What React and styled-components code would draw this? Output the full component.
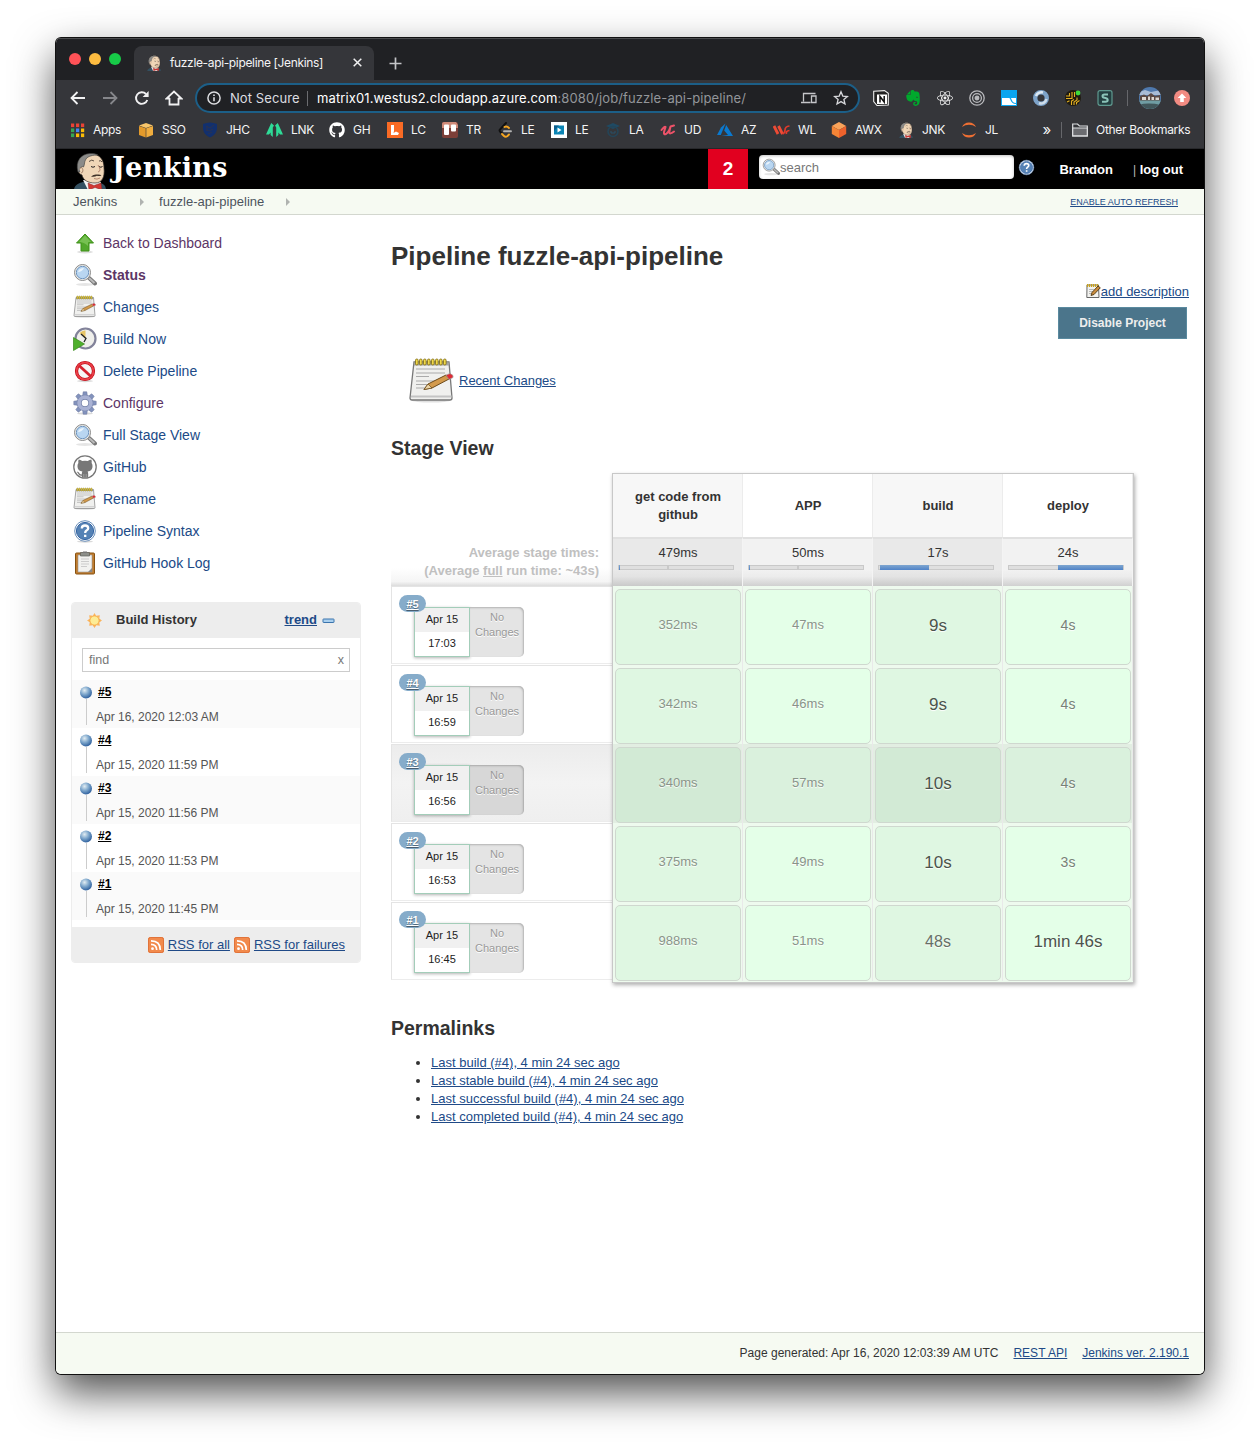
import React from "react";
import styled, { createGlobalStyle } from "styled-components";
import { FaGithub } from "react-icons/fa";
import { SiEvernote, SiReact } from "react-icons/si";

const UI = `Inter, Roboto, "Liberation Sans", sans-serif`;
const HELV = `"Liberation Sans", Arial, sans-serif`;

const Global = createGlobalStyle`
  *, *::before, *::after { box-sizing: border-box; }
  body { margin: 0; background: #fff; font-family: ${HELV}; font-size: 13px; color: #333; }
  h1, h2, ul, p { margin: 0; padding: 0; }
  svg { display: block; flex: none; }
`;

const Desktop = styled.div`
  height: 1448px;
  padding: 38px 56px 74px;
  background: #fff;
  overflow: hidden;
`;
const Window = styled.div`
  height: 1336px;
  display: flex;
  flex-direction: column;
  border-radius: 5px;
  background: #fff;
  overflow: hidden;
  box-shadow: 0 0 0 1px #111, 0 18px 42px rgba(0, 0, 0, 0.7);
`;

/* ---------- browser chrome ---------- */
const TabStrip = styled.div`
  height: 42px;
  display: flex;
  align-items: flex-end;
  background: #202124;
  border-top: 1px solid #4b4c4e;
`;
const Lights = styled.div`
  width: 78px;
  height: 100%;
  padding: 14px 0 0 13px;
  display: flex;
  gap: 8px;
`;
const Light = styled.i`
  width: 12px;
  height: 12px;
  border-radius: 50%;
  background: ${(p) => p.$c};
`;
const Tab = styled.div`
  width: 240px;
  height: 34px;
  padding: 0 12px 1px 12px;
  display: flex;
  align-items: center;
  background: #35363a;
  border-radius: 8px 8px 0 0;
  font: 12px ${UI};
  letter-spacing: -0.35px;
  color: #f4f4f5;
`;
const TabTitle = styled.span`
  flex: 1;
  margin-left: 8px;
  white-space: nowrap;
`;
const NewTab = styled.div`
  height: 34px;
  display: flex;
  align-items: center;
  margin-left: 15px;
`;
const Toolbar = styled.div`
  height: 36px;
  padding: 0 14px;
  display: flex;
  align-items: center;
  background: #35363a;
`;
const NavButtons = styled.div`
  width: 125px;
  display: flex;
  gap: 16px;
  svg:last-child { margin-left: -1px; }
`;
const AddressBar = styled.div`
  width: 665px;
  height: 30px;
  padding: 0 9px 0 10px;
  display: flex;
  align-items: center;
  border: 2px solid #1c5f88;
  border-radius: 15px;
  background: #202124;
  font: 13px ${UI};
  color: #fff;
`;
const Secure = styled.span`
  width: 78px;
  margin-left: 9px;
  letter-spacing: 0.08px;
  color: #dcdde0;
  white-space: nowrap;
  border-right: 1px solid #6b6c70;
  line-height: 15px;
`;
const Url = styled.span`
  flex: 1;
  margin-left: 9px;
  letter-spacing: 0.11px;
  white-space: nowrap;
  span { color: #93969a; }
`;
const BarIcons = styled.div`
  display: flex;
  gap: 16px;
`;
const Extensions = styled.div`
  display: flex;
  align-items: center;
  gap: 16px;
  margin-left: 13px;
`;
const Divider = styled.i`
  width: 1px;
  height: 16px;
  background: #66676b;
  margin-left: ${(p) => p.$l || 0}px;
  margin-right: ${(p) => p.$r || 0}px;
`;
const Profile = styled.div`
  display: flex;
  align-items: center;
  gap: 13px;
`;
const Bookmarks = styled.div`
  height: 33px;
  padding: 0 14px 5px 13px;
  display: flex;
  align-items: center;
  background: #35363a;
  border-bottom: 1px solid #27282b;
  font: 12px ${UI};
  letter-spacing: -0.3px;
  color: #f4f4f5;
`;
const Bookmark = styled.div`
  width: ${(p) => p.$w}px;
  display: flex;
  align-items: center;
  gap: 8px;
  white-space: nowrap;
`;
const More = styled.span`
  flex: 1;
  text-align: right;
  font-size: 15px;
`;

/* ---------- Jenkins header ---------- */
const Header = styled.header`
  height: 40px;
  flex: none;
  display: flex;
  align-items: center;
  background: #000;
  color: #fff;
  font-weight: bold;
`;
const Logo = styled.div`
  width: 652px;
  height: 40px;
  padding: 3px 0 0 18px;
  display: flex;
  align-items: flex-start;
  gap: 6px;
  overflow: hidden;
  font: bold 27px/32px "DejaVu Serif", serif;
  letter-spacing: 0.35px;
`;
const Alerts = styled.div`
  width: 40px;
  height: 40px;
  line-height: 40px;
  text-align: center;
  font-size: 19px;
  background: #e1001f;
`;
const Search = styled.div`
  width: 255px;
  height: 24px;
  margin: -4px 4px 0 11px;
  padding-left: 3px;
  display: flex;
  align-items: center;
  border-radius: 4px;
  background: #fff;
  box-shadow: inset 0 1px 3px rgba(0, 0, 0, 0.25);
  font-size: 13px;
  font-weight: normal;
  color: #777;
`;
const HelpLink = styled.div`
  margin-top: -3px;
`;
const Account = styled.div`
  flex: 1;
  margin-right: 21px;
  padding-top: 1px;
  display: flex;
  justify-content: flex-end;
  gap: 20px;
  font-size: 13px;
  i { font: 12px ${HELV}; color: #bbb; }
`;
const Crumbs = styled.nav`
  height: 26px;
  flex: none;
  padding: 0 26px 0 17px;
  display: flex;
  align-items: center;
  background: #f6faf2;
  border-bottom: 1px solid #d3d7cf;
  color: #4d545d;
  font-size: 13px;
`;
const Crumb = styled.span`
  width: ${(p) => p.$w}px;
  padding-left: ${(p) => p.$pl || 0}px;
  letter-spacing: 0.03px;
`;
const Link = styled.a`
  color: #204a87;
  text-decoration: underline;
`;
const Refresh = styled(Link)`
  margin-left: auto;
  font-size: 9px;
`;

/* ---------- page ---------- */
const Page = styled.div`
  flex: 1;
  display: grid;
  grid-template-columns: 290px 1fr;
  column-gap: 30px;
  padding: 12px 15px 0;
`;
const Tasks = styled.div`
  display: flex;
  flex-direction: column;
  padding-left: 2px;
`;
const Task = styled.a`
  height: 32px;
  display: flex;
  align-items: center;
  gap: 6px;
  font-size: 14px;
  color: ${(p) => (p.$visited ? "#5c3566" : "#204a87")};
  font-weight: ${(p) => (p.$bold ? "bold" : "normal")};
`;
const History = styled.section`
  margin-top: 23px;
  height: 361px;
  border: 1px solid #ededed;
  border-radius: 4px;
  overflow: hidden;
  display: flex;
  flex-direction: column;
`;
const HistoryHead = styled.div`
  height: 35px;
  flex: none;
  padding: 0 25px 2px 14px;
  display: flex;
  align-items: center;
  background: #ededed;
  font-weight: bold;
  span { flex: 1; margin-left: 13px; }
  svg { margin-top: 2px; }
  svg:last-child { margin-left: 5px; margin-top: 3px; }
`;
const Find = styled.div`
  height: 24px;
  flex: none;
  margin: 10px 10px 8px;
  padding: 0 5px 0 6px;
  display: flex;
  justify-content: space-between;
  align-items: center;
  border: 1px solid #ccc;
  color: #777;
  font-size: 12.5px;
`;
const Build = styled.div`
  height: 48px;
  flex: none;
  padding: 6px 0 0 8px;
  display: flex;
  gap: 4px;
  background: ${(p) => (p.$odd ? "#fafafa" : "#fff")};
`;
const Marker = styled.div`
  width: 12px;
  display: flex;
  flex-direction: column;
  align-items: flex-start;
`;
const Stem = styled.i`
  width: 1px;
  height: 26px;
  margin-left: 6px;
  background: #ccc;
`;
const BuildText = styled.div`
  display: flex;
  flex-direction: column;
  gap: 11px;
  font-size: 12px;
  line-height: 14px;
  color: #555;
  b { margin-left: 2px; color: #000; text-decoration: underline; line-height: 13px; }
`;
const HistoryFoot = styled.div`
  flex: 1;
  margin-top: 7px;
  padding-right: 15px;
  display: flex;
  align-items: center;
  justify-content: flex-end;
  gap: 4px;
  background: #ededed;
`;
const Main = styled.main`
  display: flex;
  flex-direction: column;
  align-items: flex-start;
`;
const Title = styled.h1`
  margin-top: 14px;
  font-size: 26px;
  line-height: 30px;
`;
const Actions = styled.div`
  align-self: flex-end;
  display: flex;
  flex-direction: column;
  align-items: flex-end;
  margin-top: 12px;
`;
const Inline = styled.div`
  display: flex;
  align-items: center;
  height: 16px;
`;
const Disable = styled.button`
  width: 129px;
  height: 32px;
  margin: 8px 2px 0 0;
  padding: 0;
  border: 1px solid #5a8a9f;
  background: #4b758b;
  color: #eee;
  font: bold 12px ${HELV};
`;
const Recent = styled.div`
  margin: 17px 0 1px 17px;
  height: 48px;
  display: flex;
  align-items: center;
  gap: 3px;
  svg { margin-top: 2px; }
`;
const Subtitle = styled.h2`
  margin-top: ${(p) => p.$mt}px;
  font-size: 19.5px;
  line-height: 24px;
`;
const StageView = styled.div`
  margin-top: 13px;
  display: flex;
`;
const Runs = styled.div`
  width: 221px;
  display: flex;
  flex-direction: column;
`;
const Average = styled.div`
  height: 113px;
  padding: 0 13px 6px 0;
  display: flex;
  flex-direction: column;
  justify-content: flex-end;
  text-align: right;
  font-weight: bold;
  line-height: 18px;
  color: #c0c0c0;
  background: linear-gradient(rgba(255, 255, 255, 0) 84%, #f5f5f5 96%, #dcdcdc);
`;
const Run = styled.div`
  height: 77.5px;
  margin-bottom: 1.5px;
  padding: 8px 0 0 7px;
  border: 1px solid #e4e4e4;
  border-right: 0;
  border-bottom-color: #ececec;
  background: ${(p) => (p.$hover ? "linear-gradient(#ececec, #f3f3f3 50%, #efefef)" : "#fff")};
`;
const Pill = styled.b`
  position: relative;
  z-index: 1;
  display: block;
  width: 27px;
  height: 17px;
  border-radius: 9px;
  background: #86acca;
  color: #fff;
  font-size: 11px;
  line-height: 18px;
  text-align: center;
  text-decoration: underline;
  text-shadow: 0 1px 1px rgba(0, 0, 0, 0.45);
`;
const RunInfo = styled.div`
  margin: -5px 0 0 15px;
  display: flex;
  height: 50px;
`;
const RunDate = styled.div`
  width: 56px;
  border: 1px solid #a3cdb9;
  box-shadow: 0 1px 3px rgba(0, 0, 0, 0.3);
  background: #fff;
  font-size: 11px;
  line-height: 22px;
  text-align: center;
  color: #222;
  span { display: block; height: 24px; }
  span:first-child { background: #f0f0f0; }
`;
const NoChanges = styled.div`
  width: 54px;
  padding-top: 3px;
  border-radius: 0 5px 5px 0;
  background: ${(p) => (p.$hover ? "#d7d7d7" : "#e4e4e4")};
  box-shadow: inset -1px 1px 2px rgba(0, 0, 0, 0.22);
  font-size: 11px;
  line-height: 15px;
  text-align: center;
  color: #999;
  text-shadow: 0 1px 0 #fff;
`;
const Stages = styled.div`
  width: 522px;
  height: 510px;
  border: 1px solid #c8c8c8;
  box-shadow: 1px 2px 4px rgba(0, 0, 0, 0.32);
  display: grid;
  grid-template-columns: repeat(4, 130px);
  grid-template-rows: 63px 49px repeat(5, 79px);
  background: #eefbee;
`;
const StageName = styled.div`
  padding: 0 13px 0 14px;
  border-right: 1px solid #ececec;
  display: flex;
  align-items: center;
  justify-content: center;
  text-align: center;
  font-weight: bold;
  line-height: 18px;
  background: ${(p) => (p.$odd ? "#f7f7f7" : "#fff")};
`;
const StageAvg = styled.div`
  padding: 6px 8px 0 5px;
  border-top: 2px solid #e0e0e0;
  border-right: 1px solid #f4f4f4;
  line-height: 16px;
  color: #333;
  background: ${(p) =>
    p.$odd
      ? "linear-gradient(#e9e9e9 65%, #e3e3e3 80%, #c9c9c9)"
      : "linear-gradient(#f2f2f2 65%, #ececec 80%, #d0d0d0)"};
`;
const AvgTime = styled.div`
  padding-left: 4px;
  text-align: center;
`;
const Meter = styled.div`
  height: 5px;
  margin-top: 4px;
  display: flex;
  border: 1px solid #c9c9c9;
  background: #dfdfdf;
`;
const MeterFill = styled.i`
  height: 5px;
  margin-top: -1px;
  background: linear-gradient(#7fa6d0, #4f83c8);
`;
const Tick = styled.i`
  width: 2px;
  margin-left: 47px;
  background: #c9c9c9;
`;
const Cell = styled.div`
  padding: 3px 2px 0;
  border-right: 1px solid #e9e9e9;
  background: ${(p) => (p.$hover ? "#e2eee2" : "#eefaee")};
`;
const Card = styled.div`
  width: 126px;
  height: 76px;
  padding-bottom: ${(p) => (p.$fs > 15 ? 3 : 5)}px;
  display: flex;
  align-items: center;
  justify-content: center;
  border: 1px solid #cfd8cf;
  border-radius: 5px;
  background: ${(p) => p.$bg};
  color: ${(p) => p.$fg};
  font-size: ${(p) => p.$fs}px;
  text-shadow: 0 1px 1px #fff;
`;
const Permalinks = styled.ul`
  margin-top: 14px;
  padding-left: 40px;
  line-height: 18px;
`;
const Footer = styled.footer`
  height: 42px;
  flex: none;
  padding: 0 15px 1px;
  display: flex;
  align-items: center;
  justify-content: flex-end;
  gap: 15px;
  background: #f6faf2;
  border-top: 1px solid #d3d7cf;
  font-size: 12px;
`;

/* ---------- drawings ---------- */
const Butler = ({ w = 32, h = 38 }) => (
  <svg width={w} height={h} viewBox="0 0 32 38">
    <path d="M0 38C0 34 4 31 9 30L26 31C30 32 32 34 32 38Z" fill="#335061" />
    <path d="M9 28L14 38H24L27 30Z" fill="#f4f4f4" />
    <path d="M4 17C3 7 9 2 17 2C26 2 30 8 30 16C31 25 28 31 21 31C14 31 9 28 8 23C5 22 4 20 4 17Z" fill="#f0d6b7" stroke="#3a302a" strokeWidth=".7" />
    <path d="M4 20C1 9 7 2 16 1.500C19 1.400 22 1.800 24 3C19 3 14 4 12 7C10 10 11 12 9.500 15C8 14 6 15 6 20Z" fill="#8b8b89" stroke="#3a3a39" strokeWidth=".6" />
    <path d="M5.500 17Q8 14 9 18Q9 21 7 21" fill="#f0d6b7" stroke="#8a6550" strokeWidth=".7" />
    <path d="M15 9.500Q18 7 20 9M25 9Q27 8 28 10" fill="none" stroke="#4a3d33" strokeWidth=".9" />
    <path d="M17 14.500Q19 16 21 14.500M25 14.500Q27 16 28.500 14.500" fill="none" stroke="#231f20" strokeWidth="1" />
    <path d="M24 13Q28 19 24 20" fill="none" stroke="#a7745e" strokeWidth=".8" />
    <path d="M17 24.500Q20 22 23 22.500Q26 22 27.500 23.500Q25 24.500 23 23.800Q20 25.500 17 24.500Z" fill="#3d3028" />
    <path d="M20 26.500Q23 28 26 26" fill="none" stroke="#a7745e" strokeWidth=".8" />
    <path d="M14 31L20 33.500L27 31L28 38L21 35.500L15 38Z" fill="#d33833" stroke="#81302c" strokeWidth=".5" />
  </svg>
);
const Arrow = ({ dim, flip }) => (
  <svg width="16" height="16" viewBox="0 0 16 16" fill="none" stroke={dim ? "#85868a" : "#f1f1f2"} strokeWidth="1.800">
    <path d={flip ? "M1 8H14M8.500 2L14.500 8L8.500 14" : "M15 8H2M7.500 2L1.500 8L7.500 14"} />
  </svg>
);
const Reload = () => (
  <svg width="16" height="16" viewBox="0 0 16 16">
    <path d="M13.300 10A5.800 5.800 0 1 1 12 4" fill="none" stroke="#f1f1f2" strokeWidth="1.900" />
    <path d="M14.600 1V7H8.600Z" fill="#f1f1f2" />
  </svg>
);
const Home = () => (
  <svg width="18" height="16" viewBox="0 0 18 16" fill="none" stroke="#f1f1f2" strokeWidth="1.800">
    <path d="M4.500 8V14.500H13.500V8M5 8.500H1.500L9 1.500L16.500 8.500H13" />
  </svg>
);
const Info = () => (
  <svg width="14" height="14" viewBox="0 0 14 14">
    <circle cx="7" cy="7" r="6.100" fill="none" stroke="#dcdde0" strokeWidth="1.500" />
    <path d="M7 6.200V10.300M7 3.500V5" stroke="#dcdde0" strokeWidth="1.600" />
  </svg>
);
const Devices = () => (
  <svg width="16" height="16" viewBox="0 0 16 16" fill="none" stroke="#c5c6c9" strokeWidth="1.300">
    <path d="M2.500 11.500V3.500H14.500M0 12.500H9.500M10.500 6H15V12.500H10.500Z" />
  </svg>
);
const Star = () => (
  <svg width="16" height="16" viewBox="0 0 16 16" fill="none" stroke="#d7d8db" strokeWidth="1.300">
    <path d="M8 1.800L9.800 6.100L14.400 6.500L10.900 9.500L12 14L8 11.600L4 14L5.100 9.500L1.600 6.500L6.200 6.100Z" />
  </svg>
);
const Notion = () => (
  <svg width="16" height="16" viewBox="0 0 16 16">
    <path d="M.7 1.200L11.500 .6L15.300 3.200V15L4 15.500L.7 11.500Z" fill="#222" stroke="#eee" strokeWidth="1.100" />
    <path d="M4 4.500H14V14H4Z" fill="#fff" />
    <path d="M7 12.500V6.500L11.200 12V6" fill="none" stroke="#111" strokeWidth="1.500" />
  </svg>
);
const Rings = () => (
  <svg width="16" height="16" viewBox="0 0 16 16" fill="none" stroke="#b9babd" strokeWidth="1.300">
    <circle cx="8" cy="8" r="7.200" /><circle cx="8" cy="8" r="4.400" /><circle cx="8" cy="8" r="1.800" fill="#b9babd" />
  </svg>
);
const Wave = () => (
  <svg width="16" height="16" viewBox="0 0 16 16">
    <path d="M0 0H16V16H0Z" fill="#0aa5ef" />
    <path d="M1 8H8C10 8 9 14 15 14V15H1Z" fill="#fff" /><path d="M10 8H15V13C12 13 11 11 10 8Z" fill="#fff" />
  </svg>
);
const Ring = () => (
  <svg width="16" height="16" viewBox="0 0 16 16" fill="none">
    <circle cx="8" cy="8" r="5.800" stroke="#7da3c9" strokeWidth="4.400" />
    <path d="M3 6A5.500 5.500 0 0 1 10 2.500" stroke="#dde9f3" strokeWidth="2.500" />
    <path d="M13.500 9A5.500 5.500 0 0 1 6 13" stroke="#cfdde9" strokeWidth="2.500" />
  </svg>
);
const Maze = () => (
  <svg width="16" height="16" viewBox="0 0 16 16" fill="none" stroke="#e3b021" strokeWidth="1.100">
    <circle cx="8" cy="8" r="8" fill="#1f1b10" stroke="none" />
    <path d="M1 6H4.500V3M1 8.500H7V2M2 12L4.500 10.800M6.500 15V11L9 9.500M9 15V12L12 10V7.500M11.500 14.500V12.500L14.500 10.500M9.500 2V7" />
    <circle cx="13" cy="3" r="2.400" fill="#3ddc3a" stroke="none" />
  </svg>
);
const Stylish = () => (
  <svg width="16" height="16" viewBox="0 0 16 16" fill="none" stroke="#5f9a90">
    <rect x="1" y=".7" width="14" height="14.600" rx="2" fill="#233f40" strokeWidth="1.200" />
    <path d="M11 4.500H7.500Q5.500 4.500 5.500 6Q5.500 7.500 7.500 7.800L8.500 8Q10.700 8.500 10.700 10Q10.700 11.700 8.500 11.700H5" stroke="#8bc4b8" strokeWidth="2" />
  </svg>
);
const Avatar = () => (
  <svg width="22" height="22" viewBox="0 0 22 22">
    <clipPath id="av"><circle cx="11" cy="11" r="11" /></clipPath>
    <g clipPath="url(#av)">
      <path d="M0 0H22V22H0Z" fill="#4f79ad" />
      <path d="M0 5L6 3L12 5L22 3V8H0Z" fill="#a9bdd6" />
      <path d="M1 9L5 7.500L8 9L12 6L16 9L21 8V14H1Z" fill="#5b4a44" />
      <path d="M3 10H7V13H3ZM9 9.500H11V13H9ZM12.500 10H15V13H12.500ZM16.500 10.500H20V13H16.500Z" fill="#dcd8d2" />
      <path d="M0 13.500H22V22H0Z" fill="#6f9da3" /><path d="M0 17.500Q11 15.500 22 18V22H0Z" fill="#41565a" />
    </g>
  </svg>
);
const Update = () => (
  <svg width="16" height="16" viewBox="0 0 16 16">
    <circle cx="8" cy="8" r="8" fill="#f28b82" />
    <path d="M8 3.500L12.300 8H9.800V12H6.200V8H3.700Z" fill="#fff" />
  </svg>
);

const appsColors = ["#ea4335", "#ea4335", "#ea4335", "#34a853", "#4285f4", "#fbbc05", "#34a853", "#fbbc05", "#fbbc05"];
const Apps = () => (
  <svg width="16" height="16" viewBox="0 0 16 16">
    {appsColors.map((c, i) => (
      <rect key={i} x={2 + (i % 3) * 5} y={1.500 + Math.floor(i / 3) * 5} width="3.200" height="3.600" fill={c} />
    ))}
  </svg>
);
const Cube = ({ a, b, c }) => (
  <svg width="16" height="16" viewBox="0 0 16 16">
    <path d="M1 3.500L8 1L15 3.500L8 6Z" fill={a} />
    <path d="M1 4L7.700 6.300V15.500L1 13Z" fill={b} /><path d="M15 4L8.300 6.300V15.500L15 13Z" fill={c} />
  </svg>
);
const Hex = () => (
  <svg width="16" height="16" viewBox="0 0 16 16">
    <path d="M8 0L15.200 4L8 8L.8 4Z" fill="#f9a35a" />
    <path d="M.8 4L8 8V16L.8 12Z" fill="#f58536" /><path d="M15.200 4L8 8V16L15.200 12Z" fill="#ee622c" />
  </svg>
);
const Shield = () => (
  <svg width="16" height="16" viewBox="0 0 16 16">
    <path d="M1 2Q8-1 15 2V7Q14 13 8 15.500Q2 13 1 7Z" fill="#12306e" />
    <path d="M4 4L8 6L12 3M4 8L7 9L11 7M6 12L10 10M5 4V9" stroke="#2a3350" fill="none" />
  </svg>
);
const Trees = () => (
  <svg width="17" height="16" viewBox="0 0 17 16" fill="#2edb97">
    <path d="M5.200 1L8 3.500L6.800 5.500V15L4.600 13V10.500L3 12.500H0Z" />
    <path d="M11.800 1L9 3.500L10.200 5.500V15L12.400 13V10.500L14 12.500H17Z" />
  </svg>
);
const Lucid = () => (
  <svg width="16" height="16" viewBox="0 0 16 16">
    <path d="M0 0H16V16H0Z" fill="#fa6b25" />
    <path d="M4 3H7V9L6.500 11L9 9.500L12 11L11 13H4Z" fill="#fff" />
  </svg>
);
const Boards = () => (
  <svg width="16" height="16" viewBox="0 0 16 16">
    <rect width="16" height="16" rx="2" fill="#7c3f38" /><path d="M0 2Q0 0 2 0H14L16 3V6H0Z" fill="#cf8a78" />
    <rect x="2" y="2.500" width="5" height="10.500" rx="1" fill="#fff" /><rect x="9" y="2.500" width="5" height="7" rx="1" fill="#fff" />
  </svg>
);
const Leet = () => (
  <svg width="16" height="16" viewBox="0 0 16 16" fill="none" strokeWidth="1.900" strokeLinecap="round">
    <path d="M9 1L3 7.500Q2 8.500 3 9.500L5 11.500" stroke="#111" />
    <path d="M12 6L10.500 4.800Q9 4 7.500 5M5 12L7 14Q8.500 15.500 10.500 14L12 12.500" stroke="#f5a623" />
    <path d="M7 9.300H14" stroke="#b3b3b3" />
  </svg>
);
const Play = () => (
  <svg width="16" height="16" viewBox="0 0 16 16">
    <path d="M0 0H16V16H0Z" fill="#fff" /><path d="M3 3.500H13V12.500H3Z" fill="#0b85b5" /><path d="M3 3.500H8L3 9Z" fill="#0f5e8d" />
    <path d="M6.500 5.500L10.500 8L6.500 10.500Z" fill="#fff" />
  </svg>
);
const Academy = () => (
  <svg width="16" height="16" viewBox="0 0 16 16">
    <path d="M1 4L8 1L15 4L8 7Z" fill="#1f4a63" />
    <circle cx="8" cy="9.500" r="5" fill="none" stroke="#244457" strokeWidth="1.600" /><path d="M6 9v2h4V9" stroke="#285069" fill="none" />
  </svg>
);
const Azure = () => (
  <svg width="16" height="16" viewBox="0 0 16 16" fill="#0a79cf">
    <path d="M8.500 1.500L4 5.500L0 13H3.800Z" /><path d="M9.200 3L7.200 8.500L11 13L4 14H16Z" />
  </svg>
);
const Whip = () => (
  <svg width="17" height="16" viewBox="0 0 17 16" fill="none">
    <path d="M1 4L5 12M5.500 4L9.500 12" stroke="#ee4b35" strokeWidth="2.800" />
    <path d="M9.500 12Q12 11 12 8Q12 4.500 16.500 4M13.500 12Q12.500 9 16.500 8.500" stroke="#e03a2c" strokeWidth="1.700" />
  </svg>
);
const Udemy = () => (
  <svg width="16" height="16" viewBox="0 0 16 16" fill="none" stroke="#ec5268" strokeWidth="2" strokeLinecap="round">
    <path d="M1.500 8Q4.500 4 5.500 5L4 10Q3.500 13 6 12Q9 10 10.500 4.500M10.500 4.500L9.300 10Q9.300 13 14 9.500M10.500 4.500L14 3.500" />
  </svg>
);
const Lab = () => (
  <svg width="16" height="16" viewBox="0 0 16 16" fill="#ee6f33">
    <path d="M1 5Q3 .5 8 .5Q13 .5 15 5Q12 2.800 8 2.800Q4 2.800 1 5Z" /><path d="M1 11Q3 15.500 8 15.500Q13 15.500 15 11Q12 13.200 8 13.200Q4 13.200 1 11Z" />
  </svg>
);
const Folder = () => (
  <svg width="16" height="14" viewBox="0 0 16 14" stroke="#dedfe1" strokeWidth="1.200">
    <path d="M.7 12.800V1H5.500L7.500 3H15.300V12.800Z" fill="#35363a" /><path d="M.7 5H15.300V12.800H.7Z" fill="#6b6c70" />
  </svg>
);

const Lens = ({ s = 24 }) => (
  <svg width={s} height={s} viewBox="0 0 24 24">
    <ellipse cx="12" cy="21.500" rx="9" ry="1.500" fill="#000" opacity=".1" />
    <path d="M15.500 14.500L22 20.500" stroke="#777" strokeWidth="4" strokeLinecap="round" />
    <path d="M16 15L21.500 20" stroke="#bbb" strokeWidth="2" />
    <circle cx="9.500" cy="9.500" r="8" fill="#f1f1ee" stroke="#888" strokeWidth="1" />
    <circle cx="9.500" cy="9.500" r="6.200" fill="#b9d6f1" stroke="#6f95bf" />
    <path d="M5 9Q6 5 11 5Q9 9 5 9Z" fill="#eaf4fc" />
  </svg>
);
const Up = () => (
  <svg width="24" height="24" viewBox="0 0 24 24">
    <ellipse cx="12" cy="21" rx="8" ry="1.500" fill="#000" opacity=".12" />
    <path d="M12 3L20.500 12H16V20H8V12H3.500Z" fill="#52a82c" stroke="#3f9118" />
    <path d="M12 4.500L18 11H15V15Q11 11 6 11Z" fill="#8fd06a" opacity=".6" />
  </svg>
);
const Notepad = ({ s = 24 }) => (
  <svg width={s} height={s} viewBox="0 0 48 48">
    <ellipse cx="23" cy="43.500" rx="19" ry="2" fill="#000" opacity=".12" />
    <path d="M6 5H41L44 41Q44 43 42 43H4Q2 43 2 41Z" fill="#f0f0ee" stroke="#777" strokeWidth="1.300" />
    <path d="M6 5.500H41V8.500H6Z" fill="#a3a3a3" /><path d="M3 39.500H43.500" stroke="#c4c4c4" strokeWidth="1.800" />
    {[0, 1, 2, 3, 4, 5, 6, 7].map((i) => (
      <rect key={i} x={7.500 + i * 4} y="2" width="2.600" height="6" rx="1.200" fill="#f0d84a" stroke="#7c6a10" strokeWidth=".8" />
    ))}
    <path d="M8 12H37M8 16H37M8 19.500H21M8 24H34M8 27.500H27M8 31H18" stroke="#aaa" strokeWidth="1.200" />
    <path d="M16 32.500L20 27L38 18L41 22L24 31Z" fill="#d39a4c" stroke="#6c4a1a" strokeWidth="1" />
    <path d="M16 32.500L20 27L24 31Z" fill="#ecd5a8" stroke="#6c4a1a" strokeWidth=".7" />
    <path d="M38 18L42 16.500Q46 18 45 20.500L41 22.500Z" fill="#e02a34" stroke="#a3a3a3" strokeWidth=".7" />
  </svg>
);
const EditNote = () => (
  <svg width="15" height="16" viewBox="0 0 15 16">
    <path d="M1 2H12.500L13 14.500H.8Z" fill="#f2f2ef" stroke="#666" />
    <path d="M1.500 1V4M3.500 1V4M5.500 1V4M7.500 1V4M9.500 1V4M11.500 1V4" stroke="#c9a21b" strokeWidth="1.200" />
    <path d="M3 6.500H8M3 8.500H7M3 10.500H5" stroke="#aaa" strokeWidth=".8" />
    <path d="M5 12.500L6 9.500L12 3L14.300 4.800L8 11.500Z" fill="#c98b3d" stroke="#4f3510" strokeWidth=".9" />
  </svg>
);
const Clock = () => (
  <svg width="24" height="24" viewBox="0 0 24 24">
    <circle cx="12.500" cy="11.500" r="10" fill="#efefeb" stroke="#82839a" strokeWidth="2.200" />
    <path d="M12.500 11.500L6.500 6Q9.500 3 12.500 3.500Z" fill="#e7c566" />
    <path d="M8 7L13 11.500L11 15" fill="none" stroke="#222" strokeWidth="1.300" />
    <path d="M.5 10.500L11.500 17L.5 23.500Z" fill="#4fb02c" stroke="#37861a" strokeWidth=".7" />
  </svg>
);
const Stop = () => (
  <svg width="24" height="24" viewBox="0 0 24 24">
    <ellipse cx="12" cy="22" rx="8" ry="1.200" fill="#000" opacity=".15" />
    <circle cx="12" cy="12" r="8.500" fill="#f6f6f6" stroke="#b7000c" strokeWidth="3.200" />
    <circle cx="12" cy="12" r="8.500" fill="none" stroke="#ea3f48" strokeWidth="2" />
    <path d="M6 6.500L18 17.500" stroke="#d5222e" strokeWidth="2.800" />
  </svg>
);
const Gear = () => (
  <svg width="24" height="24" viewBox="0 0 24 24">
    <ellipse cx="12" cy="22.500" rx="8" ry="1.200" fill="#000" opacity=".15" />
    {[0, 45, 90, 135, 180, 225, 270, 315].map((a) => (
      <path key={a} d="M9.600 5L10.200 .8H13.800L14.400 5Z" transform={`rotate(${a} 12 12)`} fill="#8393bd" stroke="#66739b" strokeWidth=".5" />
    ))}
    <circle cx="12" cy="12" r="5.800" fill="none" stroke="#7380a8" strokeWidth="5" />
    <circle cx="12" cy="12" r="5.900" fill="none" stroke="#a9b2d4" strokeWidth="3.800" />
  </svg>
);
const Octo = () => (
  <svg width="24" height="24" viewBox="0 0 24 24">
    <circle cx="12" cy="12" r="11.200" fill="#fff" stroke="#777" strokeWidth="1.300" />
    <path
      d="M5.600 4.500Q7.500 4.500 9.300 6Q12 5.400 14.700 6Q16.500 4.500 18.400 4.500Q19 6.500 18.600 8Q19.800 9.500 19.500 12Q19 16 14.600 16.600Q15.200 17.500 15.200 19V22.300Q12 23.300 8.800 22.300V19Q8.800 17.500 9.400 16.600Q5 16 4.500 12Q4.200 9.500 5.400 8Q5 6.500 5.600 4.500Z"
      fill="#777"
    />
    <path d="M9 20Q6.500 20.500 5.800 18.500Q5.300 17.300 4.300 17" fill="none" stroke="#777" strokeWidth="1.300" />
    <path d="M10.800 19V22.500M13.200 19V22.500" stroke="#bbb" strokeWidth=".6" />
  </svg>
);
const Help = ({ s = 24 }) => (
  <svg width={s} height={s} viewBox="0 0 24 24">
    <ellipse cx="12" cy="22.500" rx="8" ry="1.200" fill="#000" opacity=".15" />
    <circle cx="12" cy="12" r="10.300" fill="#fff" stroke="#6b90bb" />
    <circle cx="12" cy="12" r="8.600" fill="#5582b5" stroke="#3465a4" />
    <path d="M8.800 9.500Q8.800 6.500 12 6.500Q15.200 6.500 15.200 9.200Q15.200 10.800 13.200 11.800Q12.200 12.400 12.200 14M12.200 15.800V18" fill="none" stroke="#fff" strokeWidth="2.300" />
  </svg>
);
const Clipboard = () => (
  <svg width="24" height="24" viewBox="0 0 24 24">
    <rect x="2.500" y="2" width="19" height="21" rx="1" fill="#c17d30" stroke="#875211" />
    <path d="M5 4H19V21H5Z" fill="#f2f2f0" stroke="#999" strokeWidth=".6" />
    <path d="M7.500 1.500H16.500V5H7.500Z" fill="#8d8f8a" stroke="#5f615d" strokeWidth=".7" /><path d="M10 .5H14V2H10Z" fill="#777" />
    <path d="M8 8H16M8 10.500H16M8 13H16M8 15.500H14" stroke="#ccc" /><path d="M15 21L19 17V21Z" fill="#888" />
  </svg>
);
const Sun = () => (
  <svg width="17" height="17" viewBox="0 0 16 16">
    <path d="M8 1L9.500 3.500L13 3L12.500 6.200L15 8L12.500 9.800L13 13L9.700 12.500L8 15L6.300 12.500L3 13L3.500 9.700L1 8L3.500 6.300L3 3L6.500 3.500Z" fill="#fbb45c" />
    <circle cx="8" cy="8" r="4.200" fill="#fdec95" stroke="#f3a43c" strokeWidth=".5" />
  </svg>
);
const Dash = () => (
  <svg width="13" height="6" viewBox="0 0 13 6">
    <rect x="1" y="1" width="11" height="3.500" rx=".5" fill="#a9cfee" stroke="#3b74ad" />
  </svg>
);
const Ball = () => (
  <svg width="12" height="13" viewBox="0 0 12 13">
    <radialGradient id="ball" cx=".38" cy=".32" r=".7">
      <stop offset="0" stopColor="#e2edf2" /><stop offset=".5" stopColor="#7ea7cc" /><stop offset="1" stopColor="#2d5f9d" />
    </radialGradient>
    <circle cx="6" cy="6.500" r="6" fill="url(#ball)" />
  </svg>
);
const Rss = () => (
  <svg width="16" height="16" viewBox="0 0 16 16">
    <rect width="16" height="16" rx="2.500" fill="#f28a4c" /><rect x=".5" y=".5" width="15" height="15" rx="2" fill="none" stroke="#e0733a" />
    <circle cx="4.500" cy="11.700" r="1.400" fill="#fff" />
    <path d="M3 7.300Q8.700 7.300 8.700 13M3 3.800Q12.300 3.800 12.300 13" fill="none" stroke="#fff" strokeWidth="1.700" />
  </svg>
);
const Caret = () => (
  <svg width="4" height="8" viewBox="0 0 4 8"><path d="M0 0L4 4L0 8Z" fill="#b0b3b0" /></svg>
);

/* ---------- data ---------- */
const bookmarks = [
  ["Apps", 69, <Apps />],
  ["SSO", 64, <Cube a="#f7c56a" b="#e39a2b" c="#f0ad3e" />],
  ["JHC", 64, <Shield />],
  ["LNK", 63, <Trees />],
  ["GH", 58, <FaGithub size={16} color="#fff" />],
  ["LC", 55, <Lucid />],
  ["TR", 55, <Boards />],
  ["LE", 54, <Leet />],
  ["LE", 54, <Play />],
  ["LA", 55, <Academy />],
  ["UD", 57, <Udemy />],
  ["AZ", 56, <Azure />],
  ["WL", 58, <Whip />],
  ["AWX", 67, <Hex />],
  ["JNK", 63, <Butler w={16} h={16} />],
  ["JL", 45, <Lab />],
];
const tasks = [
  ["Back to Dashboard", <Up />, true],
  ["Status", <Lens />, true, true],
  ["Changes", <Notepad />],
  ["Build Now", <Clock />],
  ["Delete Pipeline", <Stop />],
  ["Configure", <Gear />, true],
  ["Full Stage View", <Lens />],
  ["GitHub", <Octo />],
  ["Rename", <Notepad />],
  ["Pipeline Syntax", <Help />],
  ["GitHub Hook Log", <Clipboard />],
];
const history = [
  ["#5", "Apr 16, 2020 12:03 AM"],
  ["#4", "Apr 15, 2020 11:59 PM"],
  ["#3", "Apr 15, 2020 11:56 PM"],
  ["#2", "Apr 15, 2020 11:53 PM"],
  ["#1", "Apr 15, 2020 11:45 PM"],
];
const stages = [
  ["get code from github", "479ms", 0, 1],
  ["APP", "50ms", 0, 0.5],
  ["build", "17s", 1, 49],
  ["deploy", "24s", 49, 66],
];
const runs = [
  ["#5", "17:03", ["352ms", "47ms", "9s", "4s"]],
  ["#4", "16:59", ["342ms", "46ms", "9s", "4s"]],
  ["#3", "16:56", ["340ms", "57ms", "10s", "4s"]],
  ["#2", "16:53", ["375ms", "49ms", "10s", "3s"]],
  ["#1", "16:45", ["988ms", "51ms", "48s", "1min 46s"]],
];
const emphasis = (t) => {
  if (t.endsWith("ms")) return [13, "#899489"];
  if (t === "4s" || t === "3s") return [14, "#778277"];
  if (t === "48s") return [16, "#667066"];
  return [17, "#4c544c"];
};
const cardColor = (col, hover) =>
  hover ? (col % 2 ? "#daf1dd" : "#d2ead5") : col % 2 ? "#e4ffe8" : "#dff7e2";
const permalinks = ["Last build", "Last stable build", "Last successful build", "Last completed build"];

export default function App() {
  return (
    <Desktop>
      <Global />
      <Window>
        <TabStrip>
          <Lights><Light $c="#ff5257" /><Light $c="#fdbc40" /><Light $c="#17cb48" /></Lights>
          <Tab>
            <Butler w={16} h={16} />
            <TabTitle>fuzzle-api-pipeline [Jenkins]</TabTitle>
            <svg width="9" height="9" viewBox="0 0 9 9"><path d="M.7 .7L8.300 8.300M8.300 .7L.7 8.300" stroke="#f1f1f2" strokeWidth="1.500" /></svg>
          </Tab>
          <NewTab><svg width="13" height="13" viewBox="0 0 13 13"><path d="M6.500 .5V12.500M.5 6.500H12.500" stroke="#c4c5c8" strokeWidth="1.700" /></svg></NewTab>
        </TabStrip>
        <Toolbar>
          <NavButtons><Arrow /><Arrow flip dim /><Reload /><Home /></NavButtons>
          <AddressBar>
            <Info />
            <Secure>Not Secure</Secure>
            <Url>matrix01.westus2.cloudapp.azure.com<span>:8080/job/fuzzle-api-pipeline/</span></Url>
            <BarIcons><Devices /><Star /></BarIcons>
          </AddressBar>
          <Extensions>
            <Notion />
            <SiEvernote size={16} color="#00a82d" />
            <SiReact size={16} color="#f0f0f0" />
            <Rings /><Wave /><Ring /><Maze /><Stylish />
          </Extensions>
          <Divider $l={14} $r={11} />
          <Profile><Avatar /><Update /></Profile>
        </Toolbar>
        <Bookmarks>
          {bookmarks.map(([t, w, icon], i) => (
            <Bookmark key={i} $w={w}>{icon}{t}</Bookmark>
          ))}
          <More>»</More>
          <Divider $l={10} $r={10} />
          <Bookmark $w={118}><Folder />Other Bookmarks</Bookmark>
        </Bookmarks>

        <Header>
          <Logo><Butler />Jenkins</Logo>
          <Alerts>2</Alerts>
          <Search><Lens s={18} />search</Search>
          <HelpLink><Help s={17} /></HelpLink>
          <Account>
            <span>Brandon</span>
            <span><i>|</i> log out</span>
          </Account>
        </Header>
        <Crumbs>
          <Crumb $w={67}>Jenkins</Crumb><Caret />
          <Crumb $w={142} $pl={15}>fuzzle-api-pipeline</Crumb><Caret />
          <Refresh>ENABLE AUTO REFRESH</Refresh>
        </Crumbs>

        <Page>
          <aside>
            <Tasks>
              {tasks.map(([t, icon, visited, bold]) => (
                <Task key={t} $visited={visited} $bold={bold}>{icon}{t}</Task>
              ))}
            </Tasks>
            <History>
              <HistoryHead><Sun /><span>Build History</span><Link>trend</Link><Dash /></HistoryHead>
              <Find>find<span>x</span></Find>
              {history.map(([n, d], i) => (
                <Build key={n} $odd={i % 2 === 0}>
                  <Marker><Ball /><Stem /></Marker>
                  <BuildText><b>{n}</b><span>{d}</span></BuildText>
                </Build>
              ))}
              <HistoryFoot><Rss /><Link>RSS for all</Link><Rss /><Link>RSS for failures</Link></HistoryFoot>
            </History>
          </aside>

          <Main>
            <Title>Pipeline fuzzle-api-pipeline</Title>
            <Actions>
              <Inline><EditNote /><Link>add description</Link></Inline>
              <Disable>Disable Project</Disable>
            </Actions>
            <Recent><Notepad s={48} /><Link>Recent Changes</Link></Recent>
            <Subtitle $mt={31}>Stage View</Subtitle>
            <StageView>
              <Runs>
                <Average>
                  <span>Average stage times:</span>
                  <span>(Average <u>full</u> run time: ~43s)</span>
                </Average>
                {runs.map(([n, time], i) => (
                  <Run key={n} $hover={i === 2}>
                    <Pill>{n}</Pill>
                    <RunInfo>
                      <RunDate><span>Apr 15</span><span>{time}</span></RunDate>
                      <NoChanges $hover={i === 2}>No<br />Changes</NoChanges>
                    </RunInfo>
                  </Run>
                ))}
              </Runs>
              <Stages>
                {stages.map(([t], c) => <StageName key={t} $odd={c % 2 === 0}>{t}</StageName>)}
                {stages.map(([t, avg, off, len], c) => (
                  <StageAvg key={t} $odd={c % 2 === 0}>
                    <AvgTime>{avg}</AvgTime>
                    <Meter>
                      <MeterFill style={{ width: len, marginLeft: off }} />
                      {c < 2 && <Tick />}
                    </Meter>
                  </StageAvg>
                ))}
                {runs.map(([n, , times], r) =>
                  times.map((t, c) => {
                    const [fs, fg] = emphasis(t);
                    return (
                      <Cell key={n + c} $hover={r === 2}>
                        <Card $bg={cardColor(c, r === 2)} $fs={fs} $fg={fg}>{t}</Card>
                      </Cell>
                    );
                  })
                )}
              </Stages>
            </StageView>
            <Subtitle $mt={33}>Permalinks</Subtitle>
            <Permalinks>
              {permalinks.map((p) => <li key={p}><Link>{p} (#4), 4 min 24 sec ago</Link></li>)}
            </Permalinks>
          </Main>
        </Page>

        <Footer>
          <span>Page generated: Apr 16, 2020 12:03:39 AM UTC</span>
          <Link>REST API</Link>
          <Link>Jenkins ver. 2.190.1</Link>
        </Footer>
      </Window>
    </Desktop>
  );
}
